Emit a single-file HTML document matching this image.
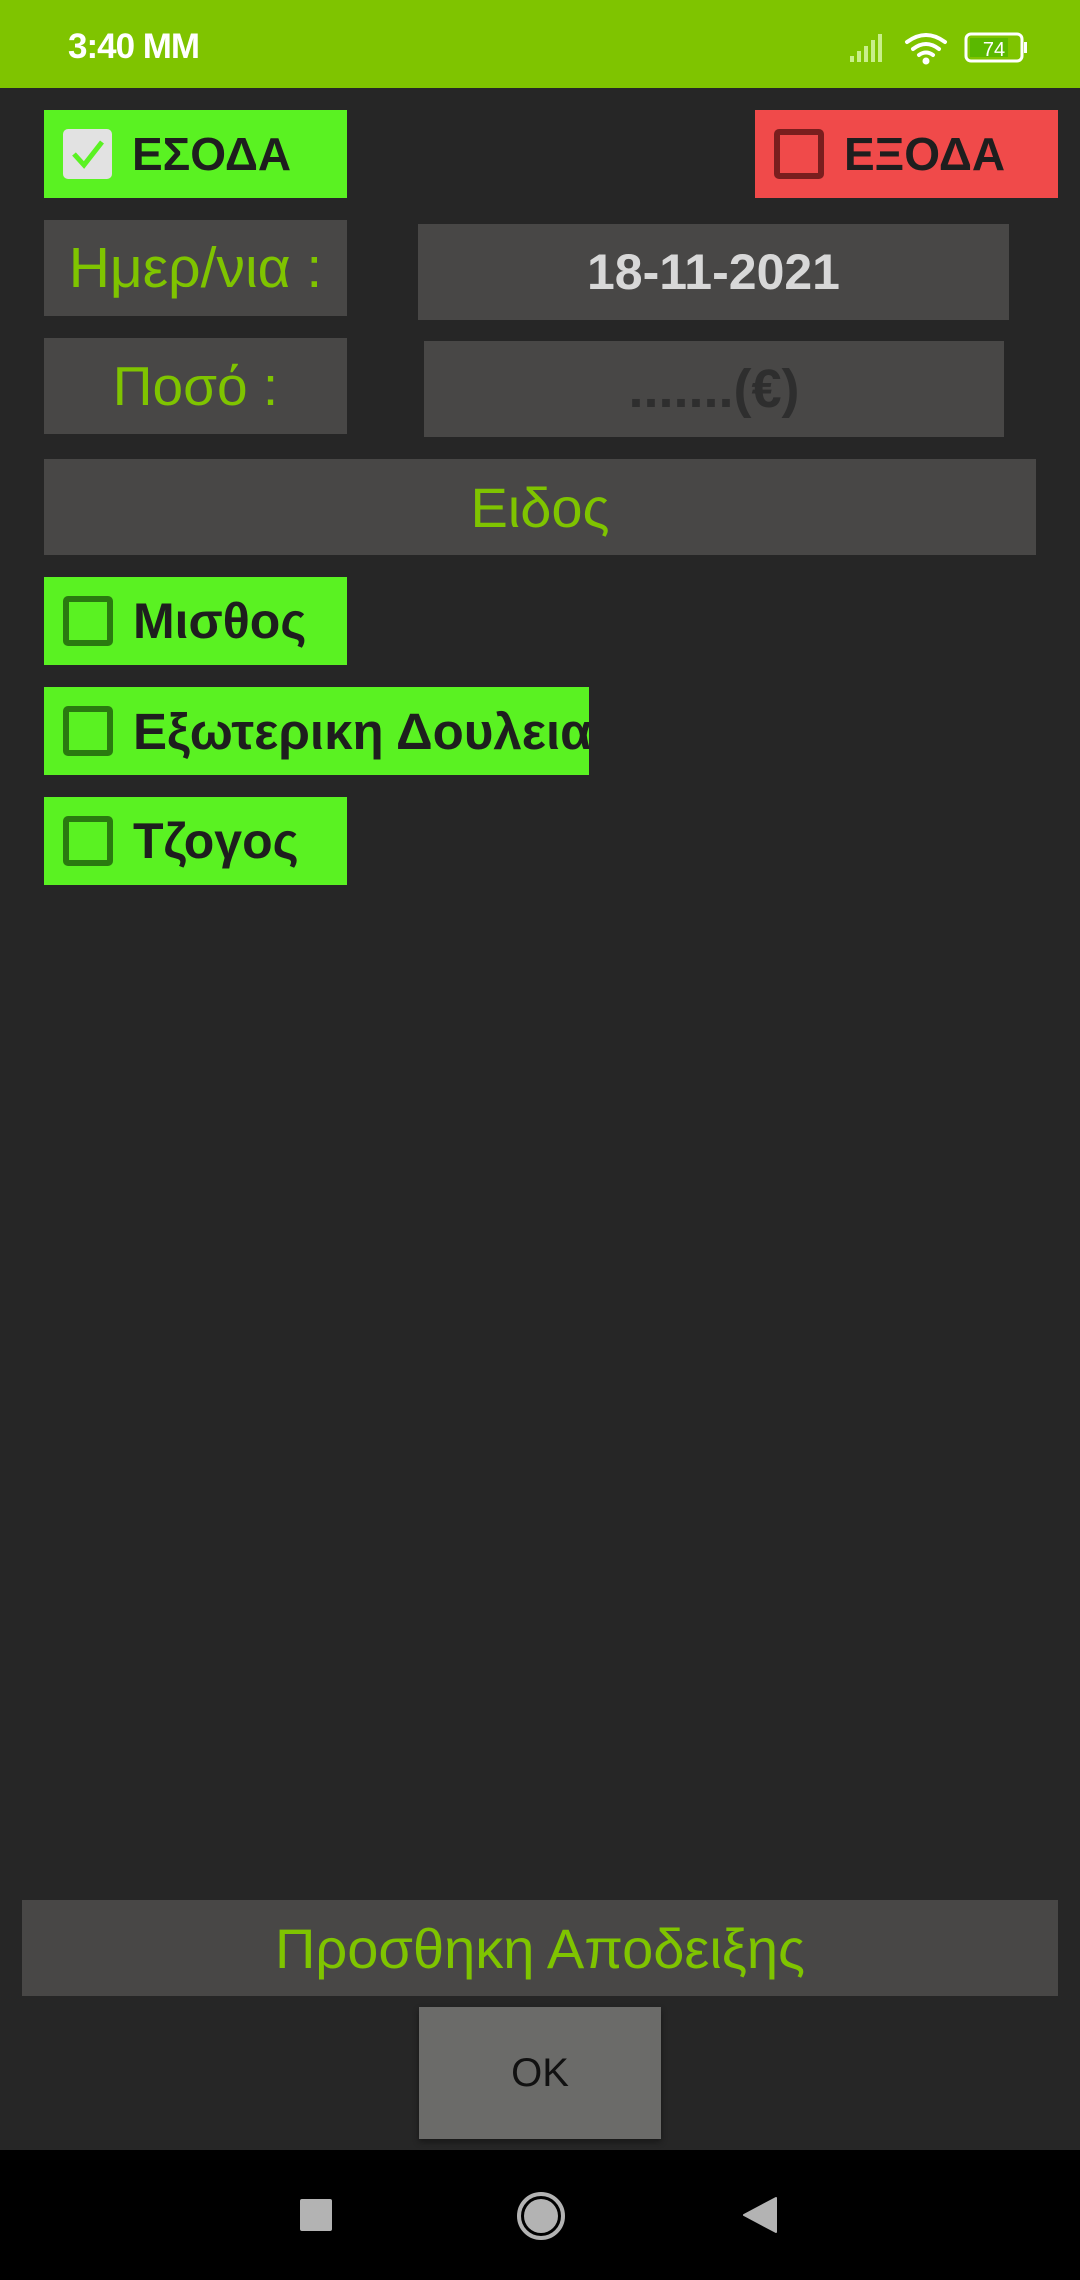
<!DOCTYPE html>
<html><head><meta charset="utf-8"><style>
*{margin:0;padding:0;box-sizing:border-box}
body{width:1080px;height:2280px;background:#262626;position:relative;overflow:hidden;font-family:"Liberation Sans","DejaVu Sans",sans-serif}
.a{position:absolute}
.status{left:0;top:0;width:1080px;height:88px;background:#7fc400}
.box{position:absolute;display:flex;align-items:center;justify-content:center;overflow:hidden;white-space:nowrap}
.g{background:#484746;color:#7fc400;font-size:55px}
.chk{background:#5af222;justify-content:flex-start;font-weight:bold;font-size:50px;color:#1e1e1e}
.cb{width:50px;height:50px;border:6px solid #2a7a10;border-radius:5px;margin-left:19px;margin-right:20px;flex:none}
</style></head><body>
<div class="a status"></div>
<div class="a" style="left:68px;top:27px;color:#fff;font-weight:bold;font-size:35px;letter-spacing:-1px">3:40 MM</div>
<svg class="a" style="left:848px;top:30px" width="200" height="36" viewBox="0 0 200 36">
 <g fill="#c9ef8a"><rect x="2" y="26" width="4" height="6"/><rect x="9" y="21" width="4" height="11"/><rect x="16" y="16" width="4" height="16"/><rect x="23" y="10" width="4" height="22"/><rect x="30" y="4" width="4" height="28"/></g>
 <g fill="none" stroke="#fff" stroke-width="4" stroke-linecap="round"><path d="M59 12 Q78 -2 97 12"/><path d="M65 19 Q78 9 91 19"/><path d="M71 25 Q78 20 85 25"/></g>
 <circle cx="78" cy="31" r="3.5" fill="#fff"/>
 <rect x="118" y="4" width="56" height="27" rx="5" fill="none" stroke="#fff" stroke-width="3"/>
 <rect x="122" y="8" width="38" height="19" fill="#5ab800"/>
 <rect x="176" y="12" width="3" height="11" fill="#fff"/>
 <text x="146" y="26" fill="#fff" font-size="20" text-anchor="middle" font-family="Liberation Sans">74</text>
</svg>

<div class="box chk" style="left:44px;top:110px;width:303px;height:88px;font-size:46px">
 <div class="cb" style="background:#e2e2e2;border:none;width:49px;height:50px;display:flex;align-items:center;justify-content:center"><svg width="40" height="40" viewBox="0 0 40 40"><path d="M6 20 L16 31 L34 8" fill="none" stroke="#5af222" stroke-width="5"/></svg></div>ΕΣΟΔΑ</div>
<div class="box chk" style="left:755px;top:110px;width:303px;height:88px;background:#f04a4a;font-size:46px">
 <div class="cb" style="border-color:#7a1e1e"></div>ΕΞΟΔΑ</div>

<div class="box g" style="left:44px;top:220px;width:303px;height:96px;font-size:57px">Ημερ/νια :</div>
<div class="box g" style="left:418px;top:224px;width:591px;height:96px;color:#d8d8d8;font-weight:bold;font-size:50px">18-11-2021</div>
<div class="box g" style="left:44px;top:338px;width:303px;height:96px">Ποσό :</div>
<div class="box g" style="left:424px;top:341px;width:580px;height:96px;color:#2e2e2e;font-weight:bold;font-size:54px">.......(€)</div>
<div class="box g" style="left:44px;top:459px;width:992px;height:96px;font-size:56px">Ειδος</div>

<div class="box chk" style="left:44px;top:577px;width:303px;height:88px"><div class="cb"></div>Μισθος</div>
<div class="box chk" style="left:44px;top:687px;width:545px;height:88px;font-size:51px"><div class="cb"></div>Εξωτερικη Δουλεια</div>
<div class="box chk" style="left:44px;top:797px;width:303px;height:88px"><div class="cb"></div>Τζογος</div>

<div class="box g" style="left:22px;top:1900px;width:1036px;height:96px;font-size:56px">Προσθηκη Αποδειξης</div>
<div class="box" style="left:419px;top:2007px;width:242px;height:132px;background:#6b6b69;color:#111;font-size:40px;box-shadow:0 3px 6px rgba(0,0,0,.4)">OK</div>

<div class="a" style="left:0;top:2150px;width:1080px;height:130px;background:#000"></div>
<div class="a" style="left:300px;top:2199px;width:32px;height:32px;background:#b3b3b3;border-radius:2px"></div>
<div class="a" style="left:517px;top:2192px;width:48px;height:48px;border:4px solid #b3b3b3;border-radius:50%"></div>
<div class="a" style="left:524px;top:2199px;width:34px;height:34px;background:#b3b3b3;border-radius:50%"></div>
<svg class="a" style="left:742px;top:2196px" width="36" height="38"><path d="M34 2 L34 36 L2 19 Z" fill="#b3b3b3" stroke="#b3b3b3" stroke-width="2" stroke-linejoin="round"/></svg>
</body></html>
